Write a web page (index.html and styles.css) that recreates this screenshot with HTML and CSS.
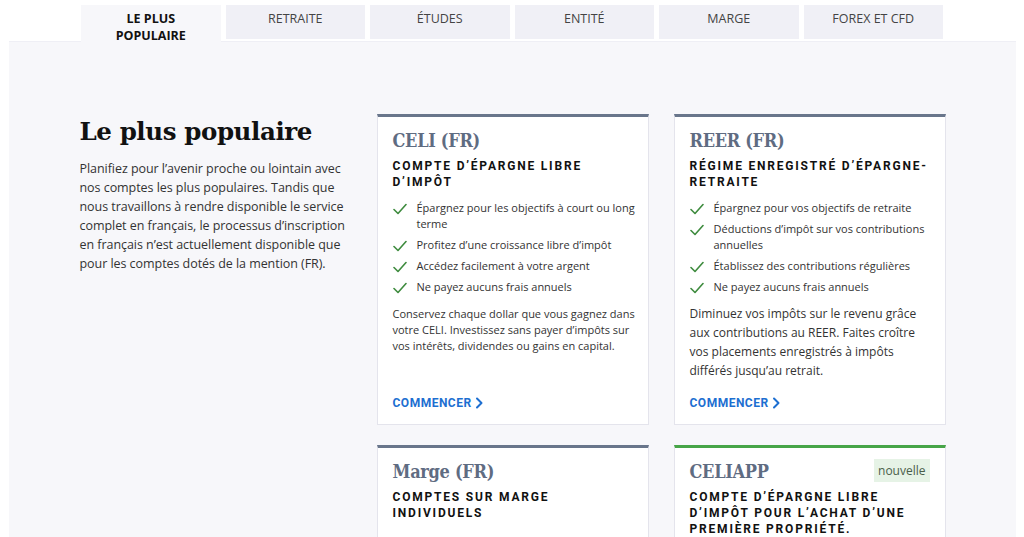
FILE: index.html
```html
<!DOCTYPE html>
<html lang="fr">
<head>
<meta charset="utf-8">
<link rel="stylesheet" href="styles.css">
</head>
<body>
<div class="page">
  <nav class="tabs">
    <div class="tab active">LE PLUS<br>POPULAIRE</div>
    <div class="tab">RETRAITE</div>
    <div class="tab">ÉTUDES</div>
    <div class="tab">ENTITÉ</div>
    <div class="tab">MARGE</div>
    <div class="tab">FOREX ET CFD</div>
  </nav>
  <section class="panel">
    <div class="content">
      <div class="intro">
        <h1>Le plus populaire</h1>
        <p>Planifiez pour l’avenir proche ou lointain avec nos comptes les plus populaires. Tandis que nous travaillons à rendre disponible le service complet en français, le processus d’inscription en français n’est actuellement disponible que pour les comptes dotés de la mention (FR).</p>
      </div>
      <div class="cards">
        <article class="card">
          <h2>CELI (FR)</h2>
          <h3>COMPTE D’ÉPARGNE LIBRE D’IMPÔT</h3>
          <ul class="checks">
            <li><svg viewBox="0 0 14 12" class="chk"><path d="M1 6.5 L5 10.5 L13 1.5"/></svg><span>Épargnez pour les objectifs à court ou long terme</span></li>
            <li><svg viewBox="0 0 14 12" class="chk"><path d="M1 6.5 L5 10.5 L13 1.5"/></svg><span>Profitez d’une croissance libre d’impôt</span></li>
            <li><svg viewBox="0 0 14 12" class="chk"><path d="M1 6.5 L5 10.5 L13 1.5"/></svg><span>Accédez facilement à votre argent</span></li>
            <li><svg viewBox="0 0 14 12" class="chk"><path d="M1 6.5 L5 10.5 L13 1.5"/></svg><span>Ne payez aucuns frais annuels</span></li>
          </ul>
          <p class="desc">Conservez chaque dollar que vous gagnez dans votre CELI. Investissez sans payer d’impôts sur vos intérêts, dividendes ou gains en capital.</p>
          <a class="cta">COMMENCER <svg viewBox="0 0 8 12" class="chev"><path d="M2 1.5 L6.5 6 L2 10.5"/></svg></a>
        </article>
        <article class="card">
          <h2>REER (FR)</h2>
          <h3>RÉGIME ENREGISTRÉ D’ÉPARGNE-RETRAITE</h3>
          <ul class="checks">
            <li><svg viewBox="0 0 14 12" class="chk"><path d="M1 6.5 L5 10.5 L13 1.5"/></svg><span>Épargnez pour vos objectifs de retraite</span></li>
            <li><svg viewBox="0 0 14 12" class="chk"><path d="M1 6.5 L5 10.5 L13 1.5"/></svg><span>Déductions d’impôt sur vos contributions annuelles</span></li>
            <li><svg viewBox="0 0 14 12" class="chk"><path d="M1 6.5 L5 10.5 L13 1.5"/></svg><span>Établissez des contributions régulières</span></li>
            <li><svg viewBox="0 0 14 12" class="chk"><path d="M1 6.5 L5 10.5 L13 1.5"/></svg><span>Ne payez aucuns frais annuels</span></li>
          </ul>
          <p class="desc large">Diminuez vos impôts sur le revenu grâce aux contributions au REER. Faites croître vos placements enregistrés à impôts différés jusqu’au retrait.</p>
          <a class="cta">COMMENCER <svg viewBox="0 0 8 12" class="chev"><path d="M2 1.5 L6.5 6 L2 10.5"/></svg></a>
        </article>
        <article class="card">
          <h2>Marge (FR)</h2>
          <h3>COMPTES SUR MARGE INDIVIDUELS</h3>
        </article>
        <article class="card new">
          <div class="card-head">
            <h2>CELIAPP</h2>
            <span class="badge">nouvelle</span>
          </div>
          <h3>COMPTE D’ÉPARGNE LIBRE D’IMPÔT POUR L’ACHAT D’UNE PREMIÈRE PROPRIÉTÉ.</h3>
        </article>
      </div>
    </div>
  </section>
</div>
</body>
</html>
```

FILE: styles.css
```css
* { box-sizing: border-box; }
html, body { margin: 0; padding: 0; background: #ffffff; }
body {
  font-family: "Open Sans", "Liberation Sans", sans-serif;
  color: #333;
  overflow: hidden;
}
.page {
  width: 1007px;
  margin: 0 auto;
  padding-top: 5px;
}
.tabs {
  display: flex;
  gap: 5px;
  width: 862px;
  margin: 0 auto;
  align-items: flex-start;
  position: relative;
  z-index: 1;
}
.tab {
  flex: 1;
  height: 34px;
  background: #f0f0f6;
  text-align: center;
  font-size: 12.5px;
  line-height: 17px;
  padding-top: 5px;
  color: #444;
}
.tab.active {
  background: #f7f7fa;
  height: 38px;
  font-weight: 700;
  color: #111;
}
.panel {
  background: #f7f7fa;
  border-top: 1px solid #efeff5;
  margin-top: -2px;
  height: 600px;
  padding-top: 72px;
}
.content {
  width: 865px;
  margin: 0 auto;
  display: flex;
  gap: 20px;
}
.intro { width: 277px; flex: none; }
.intro h1 {
  font-family: "DejaVu Serif", "Liberation Serif", serif;
  font-weight: 700;
  font-size: 24.5px;
  line-height: 32px;
  margin: 2px 0 11px;
  color: #111;
  letter-spacing: -0.4px;
}
.intro p {
  margin: 0;
  font-size: 12.5px;
  line-height: 19px;
  letter-spacing: -0.05px;
  color: #333;
}
.cards {
  display: grid;
  grid-template-columns: 272px 272px;
  column-gap: 25px;
  row-gap: 20px;
  align-content: start;
}
.card {
  background: #fff;
  border: 1px solid #e4e4ec;
  border-top: 3px solid #69768b;
  padding: 11px 11px 13px 15px;
  display: flex;
  flex-direction: column;
}
.card.new { border-top-color: #47a548; padding-right: 15px; }
.card-head {
  display: flex;
  justify-content: space-between;
  align-items: flex-start;
}
.card h2 {
  font-family: "DejaVu Serif Condensed", "DejaVu Serif", serif;
  font-stretch: condensed;
  font-weight: 700;
  font-size: 18px;
  line-height: 26px;
  color: #5f6c82;
  margin: 0 0 4px;
  letter-spacing: -0.3px;
}
.badge {
  background: #e6f3e6;
  color: #4a5e4a;
  font-size: 12px;
  line-height: 23px;
  padding: 0 4px;
  margin-top: 0;
}
.card h3 {
  font-family: Roboto, "Liberation Sans", sans-serif;
  font-weight: 700;
  font-size: 12px;
  line-height: 16px;
  letter-spacing: 1.8px;
  color: #111;
  margin: 0;
}
.checks {
  list-style: none;
  margin: 10px 0 0;
  padding: 0;
  display: flex;
  flex-direction: column;
  gap: 5px;
}
.checks li {
  display: flex;
  align-items: flex-start;
  font-size: 11px;
  line-height: 16px;
  color: #333;
}
.chk {
  width: 14px;
  height: 12px;
  flex: none;
  margin: 3px 10px 0 0;
  fill: none;
  stroke: #3e8b3e;
  stroke-width: 1.6;
  stroke-linecap: round;
  stroke-linejoin: round;
}
.desc {
  margin: 11px 0 0;
  font-size: 11px;
  line-height: 16px;
  color: #333;
}
.desc.large {
  font-size: 12px;
  line-height: 19px;
  margin-top: 9px;
}
.cta {
  margin-top: auto;
  padding-top: 15px;
  font-family: Roboto, "Liberation Sans", sans-serif;
  font-weight: 700;
  font-size: 12px;
  line-height: 16px;
  letter-spacing: 0.5px;
  color: #1d6fd1;
  display: flex;
  align-items: center;
  gap: 3px;
}
.chev {
  width: 8px;
  height: 12px;
  fill: none;
  stroke: #1d6fd1;
  stroke-width: 2;
  stroke-linecap: round;
  stroke-linejoin: round;
}
```
